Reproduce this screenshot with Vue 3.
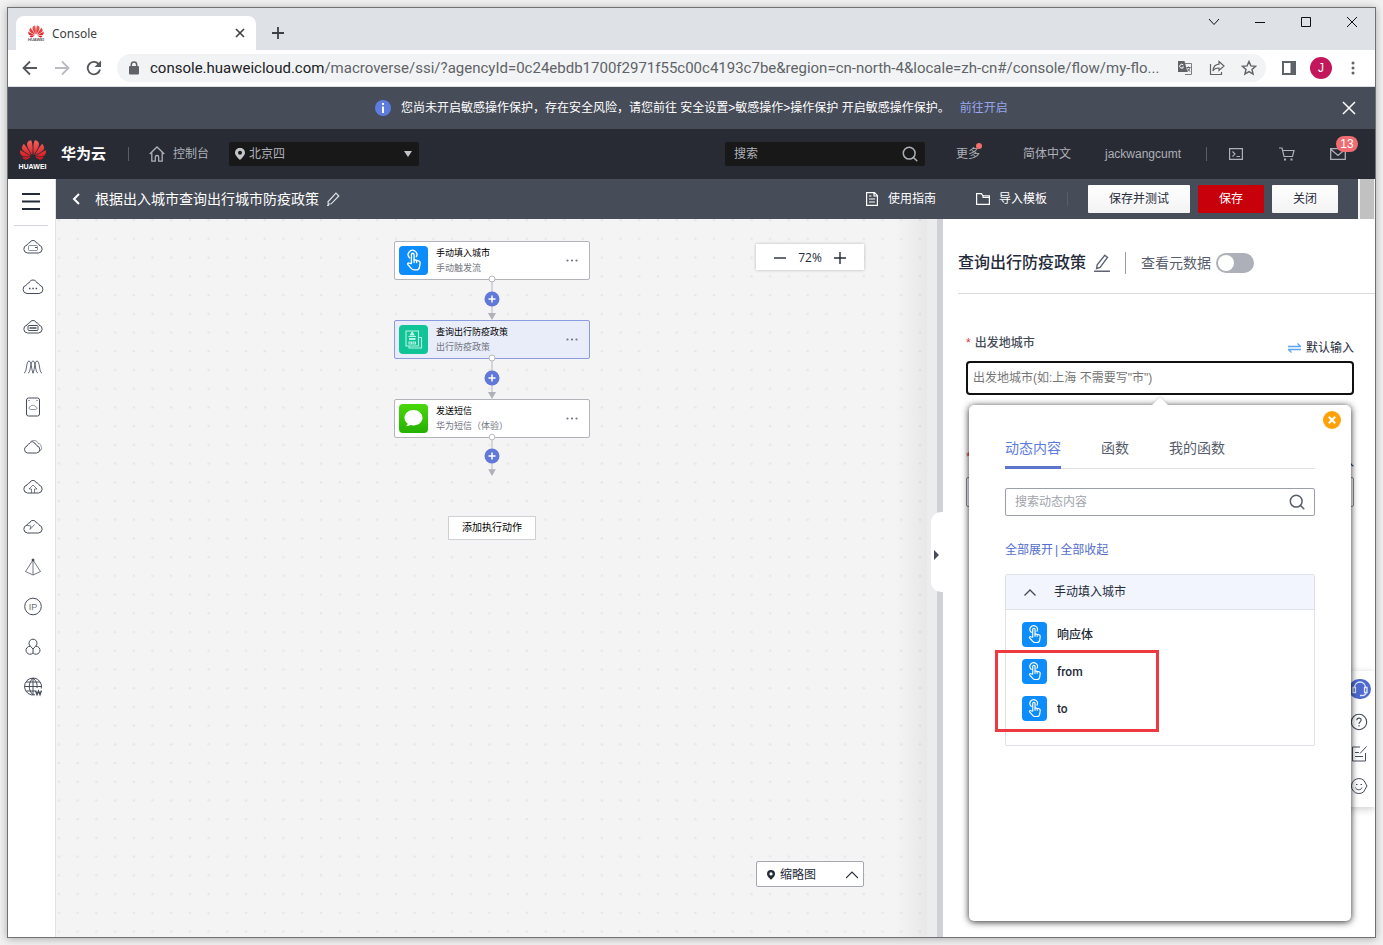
<script setup>
import { ref } from 'vue'

const cloud = '<path d="M5.500 17a4 4 0 0 1-.5-7.900C5.500 7.500 7 7 7.500 7 8.200 5 9.800 4.500 11 4.500s2.800.5 3.500 2.500c1.500 0 2.300 1 2.500 2.100a4 4 0 0 1-.5 7.900z"/>'

const menu = [
  { name: '云服务器', art: cloud + '<rect x="6.500" y="9.500" width="9" height="5" rx="1" opacity=".6"/><path d="M13 11.500h2"/>' },
  { name: '容器', art: '<path d="M5 17.500a4.200 4.200 0 0 1-.6-8.300C5 7.500 6 7 7 7 7.800 4.800 9.500 4 11 4s3.200.8 4 3c1.300 0 2.300.8 2.600 2.200a4.200 4.200 0 0 1-.6 8.300z"/><path d="M7 12.500h1.500M10.300 12.500h1.500M13.600 12.500h1.500" stroke-width="1.500"/>' },
  { name: '裸金属', art: cloud + '<rect x="6" y="9.500" width="10" height="5" rx="1"/><path d="M7.500 12h7" stroke-width="1.500"/>' },
  { name: '弹性伸缩', art: '<path d="M2 17c3 0 2-12 5-12s2 12 5 12M6 17c3 0 2-12 5-12s2 12 5 12M10 17c3 0 2-12 5-12s2 12 5 12" opacity=".85"/>' },
  { name: '云硬盘', art: '<rect x="4.500" y="2" width="13" height="18" rx="2"/><path d="M8.500 13.500c-2 0-2-2.500-.3-2.700.7-2 4.600-2 5.300 0 2 .2 2 2.700 0 2.700z" opacity=".6"/><path d="M6.500 4.500h1M14.500 4.500h1"/>' },
  { name: '云备份', art: '<path d="M5.500 17a3.600 3.600 0 0 1-.4-7C5.600 8 7 7.900 7.300 7.800 8.500 5 12 5 13 8c1 .1 1.700.6 2 1.900a3.600 3.600 0 0 1-.5 7.100z"/><path d="M8.500 6C10.500 3.500 15 4 16 7.300c2 .4 3 1.500 3 2.900 1.200 1.800.8 3.600-1.300 4.800" opacity=".6"/>' },
  { name: '上传', art: cloud + '<path d="M9.500 17v-4H7l4-4 4 4h-2.500v4" opacity=".7"/>' },
  { name: '加速', art: cloud + '<path d="M5 9.300l4 .7-1 3.500 4.500-5" opacity=".7"/>' },
  { name: '云网络', art: '<path d="M11 4L3.500 15.500 11 19l7.500-3.500zM11 4v15" opacity=".75"/><circle cx="11" cy="4" r="1" fill="#252b3a"/>' },
  { name: '弹性公网', art: '<circle cx="11" cy="10.500" r="8.300"/><text x="11" y="13.500" text-anchor="middle" font-size="9" stroke="none" fill="#6d6f78" font-family="Liberation Sans, sans-serif">IP</text>' },
  { name: '集群', art: '<path d="M8.500 10.300a4 4 0 1 1 5 0M8.500 10.300a4 4 0 1 0 2.500 6.600V13M13.500 10.300a4 4 0 1 1-2.500 6.600M8.500 10.300L11 13l2.500-2.700"/>' },
  { name: '域名', art: '<path d="M19.300 12.500A8.500 8.500 0 1 0 13 18.800M11 2v17M2.500 10.500h17M4 6h14M4 15h9M11 2c-5 5-5 12 0 17M11 2c3.500 3 4.500 6.500 4 10"/><path d="M13.500 14.500l1.500 4 1.500-3.500 1.500 3.500 1.500-4" stroke-width="1.400"/>' }
]

const nodes = [
  { kind: 'tap', title: '手动填入城市', sub: '手动触发流' },
  { kind: 'doc', title: '查询出行防疫政策', sub: '出行防疫政策', active: true },
  { kind: 'sms', title: '发送短信', sub: '华为短信（体验）' }
]

const outputs = [
  { label: '响应体' },
  { label: 'from' },
  { label: 'to' }
]

const tabs = ['动态内容', '函数', '我的函数']
const current = ref(tabs[0])
const meta = ref(false)
const from = ref('')
</script>

<template>
  <svg class="defs" aria-hidden="true">
    <defs>
      <linearGradient id="petal" x1="0" y1="0" x2="0" y2="1">
        <stop offset="0" stop-color="#f5635a" /><stop offset="1" stop-color="#d3101c" />
      </linearGradient>
      <symbol id="flower" viewBox="0 2 24 20">
        <path fill="url(#petal)" d="M3.670 6.140S1.820 7.910 1.720 9.780v.35c.08 1.510 1.220 2.400 1.220 2.400 1.830 1.790 6.260 4.040 7.300 4.550 0 0 .06.03.1-.01l.02-.04v-.04C7.520 10.800 3.670 6.140 3.670 6.140zM9.650 18.600c-.02-.08-.1-.08-.1-.08l-7.380.26c.8 1.430 2.150 2.530 3.560 2.200.96-.25 3.160-1.780 3.880-2.300.06-.05.04-.09.04-.09zm.08-.78C6.490 15.630.21 12.280.21 12.280c-.15.46-.2.9-.21 1.300v.07c0 1.070.4 1.820.4 1.820.8 1.690 2.340 2.200 2.340 2.200.7.3 1.400.31 1.400.31.12.02 4.400 0 5.540 0 .05 0 .08-.05.08-.05v-.06c0-.03-.03-.05-.03-.05zM9.060 3.190a3.420 3.420 0 0 0-2.570 3.150v.41c.03.6.16 1.050.16 1.050.66 2.900 3.860 7.650 4.550 8.650.05.05.1.03.1.03a.1.1 0 0 0 .06-.1c1.060-10.600-1.110-13.420-1.110-13.420-.32.02-1.190.23-1.190.23zm8.299 2.270s-.49-1.800-2.440-2.280c0 0-.57-.14-1.170-.22 0 0-2.180 2.810-1.120 13.430.01.07.06.08.06.08.07.03.1-.03.1-.03.72-1.030 3.900-5.760 4.550-8.640 0 0 .36-1.400.02-2.340zm-2.920 13.070s-.07 0-.09.05c0 0-.01.07.03.1.7.51 2.850 2 3.880 2.300 0 0 .16.05.43.06h.14c.69-.02 1.900-.37 3-2.260l-7.400-.25zm7.830-8.410c.14-2.060-1.940-3.970-1.940-3.980 0 0-3.850 4.660-6.670 10.800 0 0-.03.08.02.13l.04.01h.06c1.060-.53 5.460-2.770 7.280-4.540 0 0 1.150-.93 1.210-2.420zm1.520 2.140s-6.280 3.370-9.520 5.550c0 0-.05.04-.03.11 0 0 .03.06.07.06 1.160 0 5.560 0 5.670-.02 0 0 .57-.02 1.270-.29 0 0 1.560-.5 2.370-2.270 0 0 .73-1.450.17-3.140z" />
      </symbol>
      <symbol id="tap" viewBox="0 0 28 28">
        <g fill="none" stroke="#fff" stroke-width="1.300" stroke-linejoin="round" stroke-linecap="round">
          <path d="M10.300 11.500a4.200 4.200 0 1 1 6.500-1.200" />
          <path d="M12 17V8.300a1.300 1.300 0 0 1 2.600 0v5l4.400 1c1 .3 1.500.9 1.400 2l-.6 4c-.3 1.700-1.400 2.700-3 2.700h-2.300c-1 0-1.800-.4-2.500-1.200l-3.500-4c-.5-.8.3-1.700 1.300-1.300z" />
          <path d="M14.600 13.500v2.500M17 14v2" />
        </g>
      </symbol>
      <symbol id="lens" viewBox="0 0 16 16">
        <g fill="none" stroke="currentColor" stroke-width="1.500" stroke-linecap="round"><circle cx="7.200" cy="7.200" r="5.900" /><path d="M11.500 11.500l3.300 3.300" /></g>
      </symbol>
      <symbol id="pin" viewBox="0 0 10 12">
        <path fill="currentColor" fill-rule="evenodd" d="M5 12S0 7.800 0 4.800a5 5 0 0 1 10 0C10 7.800 5 12 5 12zM5 6.700a2 2 0 1 0 0-4 2 2 0 0 0 0 4z" />
      </symbol>
      <symbol id="swap" viewBox="0 0 13 10">
        <path d="M0 3.500h12.500L9.500.5M13 6.500H.5l3 3" fill="none" stroke="#5aa5f2" stroke-width="1.300" />
      </symbol>
    </defs>
  </svg>

  <div class="window">
    <header class="tabbar">
      <div class="tab">
        <span class="favicon"><svg width="16" height="13"><use href="#flower" /></svg><b>HUAWEI</b></span>
        <span class="tabname">Console</span>
        <button aria-label="关闭标签页"><svg width="10" height="10" viewBox="0 0 10 10"><path d="M1 1l8 8M9 1L1 9" stroke="#3c4043" stroke-width="1.600" /></svg></button>
      </div>
      <button class="newtab" aria-label="新标签页"><svg width="12" height="12" viewBox="0 0 12 12"><path d="M6 0v12M0 6h12" stroke="#3c4043" stroke-width="1.800" /></svg></button>
      <div class="sys">
        <button aria-label="搜索标签页"><svg width="12" height="12" viewBox="0 0 12 12"><path d="M1 3l5 5.500L11 3" /></svg></button>
        <button aria-label="最小化"><svg width="12" height="12" viewBox="0 0 12 12"><path d="M1 6.500h10" /></svg></button>
        <button aria-label="最大化"><svg width="12" height="12" viewBox="0 0 12 12"><path d="M1.500 1.500h9v9h-9z" /></svg></button>
        <button aria-label="关闭"><svg width="12" height="12" viewBox="0 0 12 12"><path d="M1 1l10 10M11 1L1 11" /></svg></button>
      </div>
    </header>

    <div class="toolbar">
      <button aria-label="后退"><svg width="16" height="16" viewBox="0 0 16 16" fill="none" stroke="#55585d" stroke-width="1.800"><path d="M15 8H2M8 1.500L1.500 8 8 14.500" /></svg></button>
      <button aria-label="前进"><svg width="16" height="16" viewBox="0 0 16 16" fill="none" stroke="#b9bbbe" stroke-width="1.800"><path d="M1 8h13M8 1.500L14.500 8 8 14.500" /></svg></button>
      <button aria-label="刷新"><svg width="16" height="16" viewBox="0 0 16 16" fill="none" stroke="#55585d" stroke-width="1.900"><path d="M14 9.500A6.200 6.200 0 1 1 12.600 4l1 1" /><path d="M15 .5V7H8.500z" fill="#55585d" stroke="none" /></svg></button>
      <div class="address">
        <svg width="10" height="14" viewBox="0 0 10 14"><rect y="5" width="10" height="8.500" rx="1" fill="#5f6368" /><path d="M2.300 5.500V3.700a2.700 2.700 0 0 1 5.400 0v1.800" fill="none" stroke="#5f6368" stroke-width="1.500" /></svg>
        <span class="url"><b>console.huaweicloud.com</b>/macroverse/ssi/?agencyId=0c24ebdb1700f2971f55c00c4193c7be&amp;region=cn-north-4&amp;locale=zh-cn#/console/flow/my-flo...</span>
        <button aria-label="翻译"><svg width="16" height="16" viewBox="0 0 16 16"><path d="M6 3.500h8.500v11H8" fill="none" stroke="#7b7e83" /><path d="M1 1h6.500l3 11H1z" fill="#5f6368" /><path d="M6.300 5a2 2 0 1 0 .2 2.200H4.800" fill="none" stroke="#fff" /><path d="M9.500 7.500h4M11.500 6.500v1M13 7.500c-.5 2-1.500 3-3 4M10.500 8.500c.5 1.300 1.500 2.300 2.800 3" fill="none" stroke="#5f6368" /></svg></button>
        <button aria-label="分享"><svg width="16" height="16" viewBox="0 0 16 16" fill="none" stroke="#5f6368" stroke-width="1.200"><path d="M1.500 4v10.500h11V12M10 1.500l5 4.500-5 4.500V8c-3 0-5 .7-6 3 .2-4 2.500-6.500 6-6.800z" /></svg></button>
        <button aria-label="收藏"><svg width="16" height="16" viewBox="0 0 16 16" fill="none" stroke="#5f6368" stroke-width="1.400"><path d="M8 1.500l1.900 4.400 4.700.4-3.600 3.100 1.100 4.700L8 11.600l-4.100 2.500L5 9.400 1.400 6.300l4.700-.4z" /></svg></button>
      </div>
      <button aria-label="侧边栏"><svg width="14" height="14" viewBox="0 0 14 14"><path d="M1 1h12v12H1z" fill="none" stroke="#5f6368" stroke-width="2" /><path d="M8.500 1H13v12H8.500z" fill="#5f6368" /></svg></button>
      <button class="avatar" aria-label="账户">J</button>
      <button aria-label="菜单"><svg width="4" height="14" viewBox="0 0 4 14" fill="#5f6368"><circle cx="2" cy="2" r="1.500" /><circle cx="2" cy="7" r="1.500" /><circle cx="2" cy="12" r="1.500" /></svg></button>
    </div>

    <div class="notice">
      <svg width="16" height="16" viewBox="0 0 16 16"><circle cx="8" cy="8" r="8" fill="#5e7ce0" /><path d="M7 3h2v2H7zM7 6.500h2V13H7z" fill="#fff" /></svg>
      <p>您尚未开启敏感操作保护，存在安全风险，请您前往 安全设置&gt;敏感操作&gt;操作保护 开启敏感操作保护。</p>
      <a href="#protect">前往开启</a>
      <button aria-label="关闭提示"><svg width="14" height="14" viewBox="0 0 14 14"><path d="M1 1l12 12M13 1L1 13" stroke="#fff" stroke-width="1.500" /></svg></button>
    </div>

    <nav class="topnav">
      <a class="logo" href="#home" aria-label="华为云"><svg width="26" height="22"><use href="#flower" /></svg><b>HUAWEI</b></a>
      <a class="brand" href="#home">华为云</a>
      <i class="bar"></i>
      <a class="home" href="#console"><svg width="16" height="16" viewBox="0 0 16 16" fill="none" stroke="#adb0b8" stroke-width="1.300"><path d="M.7 8L8 1l7.300 7M2.800 6.500v8.700h3.500v-4a1.700 1.700 0 0 1 3.400 0v4h3.500V6.500" /></svg>控制台</a>
      <div class="region">
        <svg width="10" height="12"><use href="#pin" /></svg>
        <select aria-label="区域"><option>北京四</option></select>
        <svg width="8" height="6" viewBox="0 0 8 6"><path d="M0 0h8L4 6z" fill="currentColor" /></svg>
      </div>
      <label class="find"><input type="text" placeholder="搜索" aria-label="搜索" /><svg width="16" height="16"><use href="#lens" /></svg></label>
      <a class="more" href="#more">更多<i></i></a>
      <a class="lang" href="#lang">简体中文</a>
      <a class="user" href="#user">jackwangcumt</a>
      <i class="bar"></i>
      <button class="term" aria-label="终端"><svg width="14" height="12" viewBox="0 0 14 12" fill="none" stroke="#adb0b8" stroke-width="1.200"><path d="M.6.6h12.800v10.800H.6zM3.500 3.500L6 6 3.500 8.500M7.500 8.500H11" /></svg></button>
      <button class="cart" aria-label="购物车"><svg width="16" height="14" viewBox="0 0 16 14" fill="none" stroke="#adb0b8" stroke-width="1.200"><path d="M0 1h3l2 8.500h8.500L15 3.500H4" /><path d="M5 12.500h2M11.500 12.500h2" stroke-width="2" /></svg></button>
      <button class="mail" aria-label="消息"><svg width="16" height="12" viewBox="0 0 16 12" fill="none" stroke="#adb0b8" stroke-width="1.300"><path d="M.7.7h14.600v10.600H.7zM1 1.500l7 6 7-6" /></svg><span>13</span></button>
    </nav>

    <div class="body">
      <aside class="menu">
        <button class="burger" aria-label="展开菜单"><svg width="18" height="17" viewBox="0 0 18 17"><path d="M0 1h18M0 8.500h18M0 16h18" stroke="#252b3a" stroke-width="2" /></svg></button>
        <button v-for="m in menu" :key="m.name" :aria-label="m.name" class="item">
          <svg width="22" height="22" viewBox="0 0 22 22" fill="none" stroke="#464c5a" stroke-width="1" v-html="m.art"></svg>
        </button>
      </aside>

      <div class="work">
        <div class="subhead">
          <button aria-label="返回"><svg width="8" height="12" viewBox="0 0 8 12"><path d="M7 1L2 6l5 5" fill="none" stroke="#fff" stroke-width="2" /></svg></button>
          <h1>根据出入城市查询出行城市防疫政策</h1>
          <button aria-label="编辑名称"><svg width="14" height="14" viewBox="0 0 14 14" fill="none" stroke="#dfe1e6" stroke-width="1.200"><path d="M10 1.200l2.800 2.800-7.600 7.800-2.900.3-.3-2.300zM1 13.300h2" /></svg></button>
          <a class="guide" href="#guide"><svg width="12" height="14" viewBox="0 0 12 14" fill="none" stroke="#fff" stroke-width="1.200"><path d="M.6.6h7.900l2.900 2.900v9.900H.6zM8 .6V4h3.400M3 7h6M3 10h6M3 4h2.500" /></svg>使用指南</a>
          <a class="import" href="#import"><svg width="14" height="12" viewBox="0 0 14 12" fill="none" stroke="#fff" stroke-width="1.200"><path d="M.6.600h4.900L7 2.900h6.400v8.500H.6zM7 2.900v1.600H13" /></svg>导入模板</a>
          <i class="bar"></i>
          <button class="btn wide">保存并测试</button>
          <button class="btn red">保存</button>
          <button class="btn">关闭</button>
          <span class="scroll"></span>
        </div>

        <div class="split">
          <main class="canvas">
            <svg class="dots" width="100%" height="100%" aria-hidden="true">
              <defs><pattern id="grid" width="26" height="26" patternUnits="userSpaceOnUse" patternTransform="scale(.72)"><circle cx="4" cy="1.700" r="1.800" fill="#e7e7e9" /></pattern></defs>
              <rect width="100%" height="100%" fill="url(#grid)" />
            </svg>
            <div class="flow">
              <template v-for="n in nodes" :key="n.title">
                <article class="node" :class="{ active: n.active }">
                  <svg v-if="n.kind === 'tap'" class="pic blue" width="29" height="29"><use href="#tap" /></svg>
                  <svg v-else-if="n.kind === 'doc'" class="pic green" width="29" height="29" viewBox="0 0 29 29" fill="none" stroke="#b9f3e2" stroke-width="1.100"><path d="M7 6h12.500v15H7zM19.500 12.500h3V23H10v-2M9.500 11.500h7.500M10 17h2.500v2H10zM14 17h2.500v2H14z" /><path d="M10 14h6.500" stroke-width="1.800" /><path d="M13.200 7l1.800 3h-3.600z" fill="#d9fff4" /></svg>
                  <svg v-else class="pic lime" width="29" height="29" viewBox="0 0 29 29"><path d="M14.500 6c5 0 9 3.400 9 7.800s-4 7.700-9 7.700c-1.200 0-2.300-.2-3.300-.5-1.200.8-2.500 1.200-4.200 1.200 1-.8 1.500-1.500 1.600-2.600-1.900-1.400-3.100-3.400-3.100-5.800 0-4.400 4-7.800 9-7.800z" fill="#fff" /></svg>
                  <div><h2>{{ n.title }}</h2><p>{{ n.sub }}</p></div>
                  <button aria-label="更多操作"><svg width="12" height="3" viewBox="0 0 12 3" fill="#71757f"><circle cx="1.500" cy="1.500" r="1.100" /><circle cx="6" cy="1.500" r="1.100" /><circle cx="10.500" cy="1.500" r="1.100" /></svg></button>
                </article>
                <div class="link">
                  <svg width="16" height="40" viewBox="0 0 16 40"><path d="M8 0v36" stroke="#b6b6bf" /><path d="M4 33h8l-4 7z" fill="#b0b0ba" /><circle cx="8" cy="-1" r="3" fill="#fff" stroke="#b6b6bf" /></svg>
                  <button aria-label="插入动作"><svg width="16" height="16" viewBox="0 0 16 16"><circle cx="8" cy="8" r="7.500" fill="#6278d8" /><path d="M8 4.500v7M4.500 8h7" stroke="#fff" stroke-width="1.500" /></svg></button>
                </div>
              </template>
              <button class="add">添加执行动作</button>
            </div>
            <div class="zoom">
              <button aria-label="缩小"><svg width="12" height="12" viewBox="0 0 12 12"><path d="M0 6h12" stroke="#252b3a" stroke-width="1.400" /></svg></button>
              <span>72%</span>
              <button aria-label="放大"><svg width="12" height="12" viewBox="0 0 12 12"><path d="M6 0v12M0 6h12" stroke="#252b3a" stroke-width="1.400" /></svg></button>
            </div>
            <button class="thumb"><svg width="8" height="10"><use href="#pin" /></svg><span>缩略图</span><svg width="12" height="8" viewBox="0 0 12 8"><path d="M0 7l6-6 6 6" fill="none" stroke="#252b3a" stroke-width="1.200" /></svg></button>
          </main>

          <section class="panel">
            <button class="fold" aria-label="收起面板"><svg width="5" height="10" viewBox="0 0 5 10"><path d="M0 0l5 5-5 5z" fill="#464c59" /></svg></button>
            <div class="phead">
              <h2>查询出行防疫政策</h2>
              <button aria-label="编辑"><svg width="16" height="18" viewBox="0 0 16 18" fill="none" stroke="#5f6472" stroke-width="1.400"><path d="M10.800 1.200l2.700 2.200-7.400 10-3.500 1 .6-3.500zM0 17.200h16" /></svg></button>
              <i class="bar"></i>
              <label for="meta">查看元数据</label>
              <input id="meta" v-model="meta" type="checkbox" role="switch" />
            </div>
            <div class="row">
              <label for="from"><em>*</em>出发地城市</label>
              <button class="swap"><svg width="13" height="10"><use href="#swap" /></svg>默认输入</button>
            </div>
            <input id="from" v-model="from" class="field focus" type="text" placeholder="出发地城市(如:上海 不需要写&quot;市&quot;)" />
            <div class="row second">
              <label for="to"><em>*</em></label>
              <button class="swap"><svg width="13" height="10"><use href="#swap" /></svg>默认输入</button>
            </div>
            <input id="to" class="field" type="text" aria-label="目的地城市" />

            <div class="float">
              <button class="head" aria-label="客服"><svg width="22" height="20" viewBox="0 0 22 20" fill="none" stroke="#dfe5fb" stroke-width="1.300"><path d="M5.500 8.500a5.500 5.500 0 0 1 11 0M4 8.500h2.500v5H4zM15.500 8.500H18v5h-2.500zM17 13.500c0 2-2 3-4 3h-2" /></svg></button>
              <button aria-label="帮助"><svg width="18" height="18" viewBox="0 0 18 18" fill="none" stroke="#464c59" stroke-width="1.100"><circle cx="9" cy="9" r="7.700" /><path d="M6.800 7.300c0-3 4.400-2.800 4.400-.2 0 1.700-2.200 1.600-2.200 3.800M9 12v1.500" /></svg></button>
              <button aria-label="反馈"><svg width="18" height="18" viewBox="0 0 18 18" fill="none" stroke="#464c59" stroke-width="1"><path d="M10 2H2.500v14h13V8M16.500 1.500L10 8.500M5 7.500h4M5 11.500h8" /></svg></button>
              <button aria-label="评价"><svg width="18" height="18" viewBox="0 0 18 18" fill="none" stroke="#464c59" stroke-width="1"><path d="M14 3.500A7.500 7.500 0 1 0 13.500 15L17 9z" /><path d="M5.500 10.500c1 3 5.500 3 6.500 0M6 7.500h1.500M10.500 7.500H12" /></svg></button>
            </div>

            <div class="pop">
              <button class="close" aria-label="关闭弹层"><svg width="18" height="18" viewBox="0 0 18 18"><circle cx="9" cy="9" r="9" fill="#ffa10a" /><path d="M5.800 5.800l6.400 6.400M12.200 5.800l-6.400 6.400" stroke="#fff" stroke-width="2" /></svg></button>
              <div class="tabs" role="tablist">
                <button v-for="t in tabs" :key="t" role="tab" :aria-selected="current === t" :class="{ on: current === t }" @click="current = t">{{ t }}</button>
              </div>
              <label class="search"><input type="text" placeholder="搜索动态内容" aria-label="搜索动态内容" /><svg width="16" height="16"><use href="#lens" /></svg></label>
              <p class="links"><a href="#open">全部展开</a><span>|</span><a href="#fold">全部收起</a></p>
              <div class="group">
                <button class="ghead"><svg width="12" height="7" viewBox="0 0 12 7"><path d="M.5 6.500L6 1l5.500 5.500" fill="none" stroke="#464c59" stroke-width="1.400" /></svg>手动填入城市</button>
                <ul>
                  <li v-for="o in outputs" :key="o.label"><svg class="pic blue" width="25" height="25"><use href="#tap" /></svg>{{ o.label }}</li>
                </ul>
                <div class="mark"></div>
              </div>
            </div>
          </section>
        </div>
      </div>
    </div>
  </div>
</template>

<style>
body {
  margin: 0;
  background: #f1f1f1;
}
</style>

<style scoped>
* { box-sizing: border-box; }
.defs { position: absolute; width: 0; height: 0; }
button { border: 0; padding: 0; background: none; font: inherit; color: inherit; display: inline-flex; align-items: center; justify-content: center; }
a { text-decoration: none; color: inherit; }
svg { flex: none; display: block; }
input, select { font: inherit; border: 0; outline: 0; background: none; padding: 0; min-width: 0; }
h1, h2, p, ul { margin: 0; padding: 0; font-weight: 400; }

.window {
  display: flex; flex-direction: column;
  min-height: calc(100vh - 14px);
  margin: 7px;
  border: 1px solid #707172;
  box-shadow: 0 1px 8px rgba(0, 0, 0, .3);
  background: #fff;
  overflow: hidden;
  font: 12px/16px "Liberation Sans", "Noto Sans CJK SC", sans-serif;
  color: #252b3a;
}

.tabbar { display: flex; height: 42px; padding-left: 8px; background: #dee1e6; }
.tab { display: flex; align-items: center; width: 240px; margin-top: 8px; padding: 0 11px; background: #fff; border-radius: 8px 8px 0 0; }
.favicon { display: flex; flex-direction: column; align-items: center; width: 18px; font-size: 4px; line-height: 4px; color: #555; }
.tabname { margin-left: 7px; padding-top: 1px; font: 12px/16px "Noto Sans", sans-serif; color: #3c4043; }
.tab button { margin-left: auto; }
.newtab { width: 44px; padding-top: 8px; }
.sys { display: flex; gap: 34px; margin-left: auto; padding-right: 17px; height: 28px; align-items: center; }
.sys path { fill: none; stroke: #111; stroke-width: 1; }

.toolbar { display: flex; align-items: center; gap: 16px; height: 37px; padding: 0 20px 0 14px; border-bottom: 1px solid #dcdee0; }
.address { display: flex; align-items: center; flex: 1; min-width: 0; height: 28px; margin-left: -1px; padding: 0 9px 0 12px; gap: 16px; border-radius: 14px; background: #f1f3f4; }
.url { flex: 1; min-width: 0; margin: 0 -5px; overflow: hidden; white-space: nowrap; font: 15px/20px Roboto, sans-serif; color: #5f6368; }
.url b { font-weight: 400; color: #202124; }
.avatar { width: 22px; height: 22px; margin: 0 3px 0 -2px; border-radius: 50%; background: #c2185b; color: #fff; font-size: 12px; }

.notice { display: flex; align-items: center; height: 42px; background: #474c59; color: #fff; padding: 0 19px; }
.notice > svg { margin-left: 348px; }
.notice p { margin: 0 10px; white-space: nowrap; }
.notice a { color: #96a6f0; }
.notice button { margin-left: auto; }

.topnav { display: flex; align-items: center; height: 50px; padding: 0 29px 0 11px; background: #282b33; color: #adb0b8; }
.logo { display: flex; flex-direction: column; align-items: center; gap: 2px; color: #fff; font-size: 7px; line-height: 7px; width: 27px; }
.brand { margin-left: 15px; font-size: 15px; font-weight: 700; color: #fff; }
.bar { flex: none; width: 1px; height: 14px; background: #575d6c; }
.topnav .brand + .bar { margin: 0 20px 0 22px; }
.home { display: flex; align-items: center; gap: 8px; }
.region { display: flex; align-items: center; width: 190px; height: 24px; margin-left: 20px; padding: 0 7px 0 6px; gap: 4px; background: #181818; border-radius: 2px; color: #c3c5ca; }
.region select { flex: 1; appearance: none; color: #adb0b8; height: 24px; }
.find { display: flex; align-items: center; width: 200px; height: 24px; margin-left: auto; padding: 0 7px 0 9px; background: #181818; border-radius: 2px; }
.find input { flex: 1; color: #adb0b8; }
.find input::placeholder { color: #adb0b8; opacity: 1; }
.more { position: relative; margin-left: 31px; }
.more i { position: absolute; right: -2px; top: -3px; width: 6px; height: 6px; border-radius: 50%; background: #f66f6a; }
.lang { margin-left: 43px; }
.user { margin-left: 34px; }
.user + .bar { margin: 0 22px 0 25px; }
.cart { margin-left: 36px; }
.mail { position: relative; margin-left: 35px; }
.mail span { position: absolute; left: 6px; top: -12px; width: 22px; border-radius: 8px; background: #ef6d72; color: #fff; text-align: center; }

.body { display: flex; flex: 1; }
.menu { display: flex; flex-direction: column; align-items: center; width: 48px; border-right: 1px solid #dfe1e6; padding: 0 0 20px 2px; }
.burger { width: 34px; height: 47px; margin: 0 0 1px -4px; padding-bottom: 2px; border-bottom: 1px solid #d5d7dc; }
.item { width: 34px; height: 40px; }
.work { display: flex; flex-direction: column; flex: 1; min-width: 0; }

.subhead { display: flex; align-items: center; height: 40px; padding-left: 16px; background: #474c59; color: #fff; }
.subhead h1 { margin: 0 7px 0 15px; font-size: 14px; line-height: 20px; white-space: nowrap; }
.guide, .import { display: flex; align-items: center; }
.guide { gap: 10px; margin: 0 40px 0 auto; }
.import { gap: 9px; margin-right: 20px; }
.subhead .bar { margin-right: 20px; }
.btn { width: 66px; height: 28px; margin-right: 8px; border-radius: 1px; color: #252b3a; background: linear-gradient(#fff, #f3f3f3); }
.btn.wide { width: 102px; }
.btn.red { background: #c7000b; color: #fff; }
.scroll { align-self: stretch; width: 17px; margin-left: 12px; background: #c1c1c1; border: 2px solid #f4f4f4; border-width: 0 1px 0 2px; }

.split { display: flex; flex: 1; }
.canvas { position: relative; flex: 1; min-width: 0; background: #f4f4f4; }
.dots { position: absolute; inset: 0; }
.canvas::after { content: ""; position: absolute; top: 0; right: 0; bottom: 0; width: 32px; background: linear-gradient(90deg, transparent, rgba(0, 0, 0, .05)); pointer-events: none; }
.flow { position: relative; display: flex; flex-direction: column; align-items: center; padding: 22px 0 0 1px; }
.node { display: flex; align-items: center; width: 196px; height: 39px; padding: 0 11px 0 4px; background: #fff; border: 1px solid #b2b4ba; border-radius: 2px; color: #000; }
.node.active { background: #e9edfa; border-color: #8b9be0; }
.node div { flex: 1; margin-left: 8px; }
.node h2, .node p { font-size: 9px; line-height: 15px; }
.node p { color: #71757f; }
.pic { border-radius: 4px; }
.blue { background: #0c8dfb; }
.green { background: #0fc497; }
.lime { background: linear-gradient(#4ad80c, #25b100); }
.link { position: relative; display: flex; height: 40px; }
.link svg { overflow: visible; }
.link > button { position: absolute; left: 0; right: 0; top: 11px; }
.link:nth-last-child(2) { height: 38px; }
.link:nth-last-child(2) > svg { height: 38px; }
.link:nth-last-child(2) > button { top: 10px; }
.add { width: 88px; height: 24px; margin-top: 40px; background: #fff; border: 1px solid #d0d2d7; font-size: 10px; color: #000; }
.zoom { position: absolute; right: 63px; top: 25px; display: flex; align-items: center; justify-content: center; gap: 12px; width: 108px; height: 26px; padding-top: 2px; background: #fff; box-shadow: 0 0 3px rgba(0, 0, 0, .25); font: 12px/16px "Open Sans", sans-serif; }
.thumb { position: absolute; right: 63px; bottom: 50px; width: 108px; height: 26px; padding: 2px 5px 0 10px; background: #fff; border: 1px solid #a5a8b0; border-radius: 2px; }
.thumb span { margin: 0 auto 0 5px; }

.panel { position: relative; flex: 0 0 448px; min-width: 0; padding: 0 0 20px 31px; border-left: 10px solid #ececef; background: linear-gradient(90deg, #d0d1d8 6px, #fff 6px); }
.fold { position: absolute; left: -6px; top: 293px; width: 14px; height: 80px; padding: 6px 4px 0 0; border-radius: 10px 0 0 10px; background: #fff; }
.phead { display: flex; align-items: center; height: 75px; margin-left: -10px; padding-top: 13px; border-bottom: 1px solid #d8dade; }
.phead h2 { margin-right: 8px; font-size: 16px; line-height: 24px; font-weight: 500; }
.phead .bar { height: 22px; margin: 0 15px; background: #9b9fa9; }
.phead label { font-size: 14px; line-height: 20px; color: #575d6c; }
.phead input { appearance: none; width: 38px; height: 20px; margin: 0 0 0 5px; border-radius: 10px; background: #adb0b8; padding: 2px; }
.phead input::before { content: ""; display: block; width: 16px; height: 16px; border-radius: 50%; background: #fff; }
.phead input:checked { background: #5e7ce0; padding-left: 20px; }
.row { display: flex; justify-content: space-between; height: 67px; margin: 0 21px 0 -2px; padding-top: 41px; color: #464c59; font-weight: 500; }
.row em { margin-right: 4px; color: #e0383a; font-style: normal; }
.swap { gap: 5px; height: 26px; font-weight: 400; color: #252b3a; }
.field { display: block; width: calc(100% - 19px); height: 30px; margin-left: -2px; padding: 0 6px; border: 1px solid #8d919b; border-radius: 2px; }
.field.focus { height: 34px; padding: 0 5px; border: 2px solid #101010; border-radius: 4px; }
.field::placeholder { color: #757575; opacity: 1; }
.second { height: 82px; padding-top: 54px; }

.float { position: absolute; right: 0; top: 452px; display: flex; flex-direction: column; align-items: flex-end; width: 32px; padding: 8px 7px 5px 0; background: #fff; box-shadow: 0 2px 8px rgba(0, 0, 0, .2); }
.float button { width: 18px; height: 32px; }
.float .head { width: 22px; height: 20px; margin: 0 -3px 7px 0; border-radius: 10px; background: #4f69cf; }

.pop { position: absolute; left: 32px; right: 24px; top: 186px; height: 516px; padding: 30px 36px; border-radius: 5px; background: #fff; box-shadow: 0 1px 7px rgba(0, 0, 0, .85); }
.pop::before { content: ""; position: absolute; left: 50%; top: -8px; border: solid transparent; border-width: 0 8px 8px; border-bottom-color: #fff; margin-left: -8px; filter: drop-shadow(0 -1px 1px rgba(0, 0, 0, .15)); }
.close { position: absolute; right: 10px; top: 6px; }
.tabs { display: flex; gap: 40px; border-bottom: 1px solid #dfe1e6; }
.tabs button { height: 34px; margin-bottom: -1px; padding-bottom: 6px; border-bottom: 3px solid transparent; font-size: 14px; color: #575d6c; }
.tabs .on { color: #5e7ce0; border-color: #5e75d0; }
.search { display: flex; align-items: center; height: 28px; margin-top: 19px; padding: 0 9px; border: 1px solid #9b9fa9; border-radius: 2px; color: #575d6c; }
.search input { flex: 1; }
.search input::placeholder { color: #a0a3ab; opacity: 1; }
.links { display: flex; gap: 2px; margin: 26px 0 16px; color: #526ecc; }
.group { position: relative; height: 172px; border: 1px solid #dfe1e6; border-radius: 2px; }
.ghead { display: flex; justify-content: flex-start; gap: 18px; width: 100%; height: 35px; padding-left: 18px; border-bottom: 1px solid #dfe1e6; background: #f2f5fd; color: #252b3a; }
.group ul { list-style: none; padding: 6px 16px; }
.group li { display: flex; align-items: center; gap: 10px; height: 37px; font-family: Roboto, "Noto Sans CJK SC", sans-serif; font-weight: 500; }
.mark { position: absolute; left: -11px; top: 75px; width: 164px; height: 82px; border: 3px solid #ec3a40; pointer-events: none; }
</style>
